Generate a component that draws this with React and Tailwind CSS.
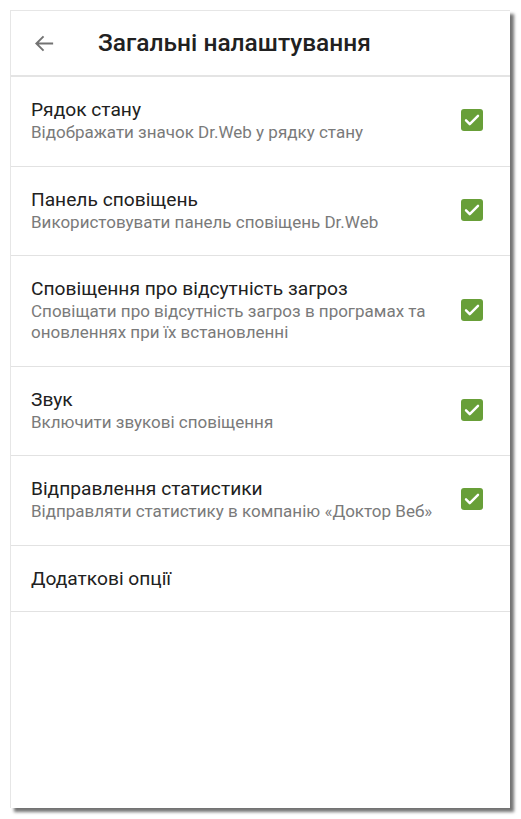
const items = [
  { title: "Рядок стану", sub: "Відображати значок Dr.Web у рядку стану", checked: true },
  { title: "Панель сповіщень", sub: "Використовувати панель сповіщень Dr.Web", checked: true },
  {
    title: "Сповіщення про відсутність загроз",
    sub: "Сповіщати про відсутність загроз в програмах та оновленнях при їх встановленні",
    checked: true,
  },
  { title: "Звук", sub: "Включити звукові сповіщення", checked: true },
  { title: "Відправлення статистики", sub: "Відправляти статистику в компанію «Доктор Веб»", checked: true },
]

const Check = () => (
  <div className="w-[22px] h-[22px] rounded-[3px] bg-[#689f38] flex items-center justify-center shrink-0">
    <svg width="18" height="18" viewBox="0 0 24 24" fill="none">
      <path d="M4 12.5l5 5L20 6.5" stroke="white" strokeWidth="3.2" strokeLinecap="round" strokeLinejoin="round" />
    </svg>
  </div>
)

const Row = ({ title, sub, checked }) => (
  <div className="flex items-center border-b border-[#e2e2e2] pl-[20px] pr-[27px] pt-[20px] pb-[22.5px]">
    <div className="flex-1 min-w-0 pr-3">
      <div className="text-[19.2px] leading-[25px] text-[#212121]">{title}</div>
      <div className="text-[17px] leading-[21px] text-[#7a7a7a]">{sub}</div>
    </div>
    {checked && <Check />}
  </div>
)

export default function App() {
  return (
    <div className="w-[521px] h-[819px] bg-white pt-[10px] pl-[10px] font-['Roboto',sans-serif]">
      <div className="w-[500px] h-[798px] bg-white border-l border-t border-[#e6e6e6] shadow-[4px_4px_3px_rgba(0,0,0,0.55)] flex flex-col">
        <div className="h-[66px] shrink-0 flex items-center border-b-2 border-[#e4e4e4]">
          <div className="w-[87px] pl-[22px] flex items-center">
            <svg width="23" height="23" viewBox="0 0 24 24" fill="none">
              <path d="M21 12H3.5M11 4.5L3.5 12l7.5 7.5" stroke="#737373" strokeWidth="2" />
            </svg>
          </div>
          <h1 className="text-[24.5px] font-medium text-[#212121]">Загальні налаштування</h1>
        </div>
        {items.map((it) => (
          <Row key={it.title} {...it} />
        ))}
        <div className="h-[66px] shrink-0 flex items-center border-b border-[#e2e2e2] pl-[20px]">
          <div className="text-[19.2px] leading-[25px] text-[#212121]">Додаткові опції</div>
        </div>
      </div>
    </div>
  )
}
